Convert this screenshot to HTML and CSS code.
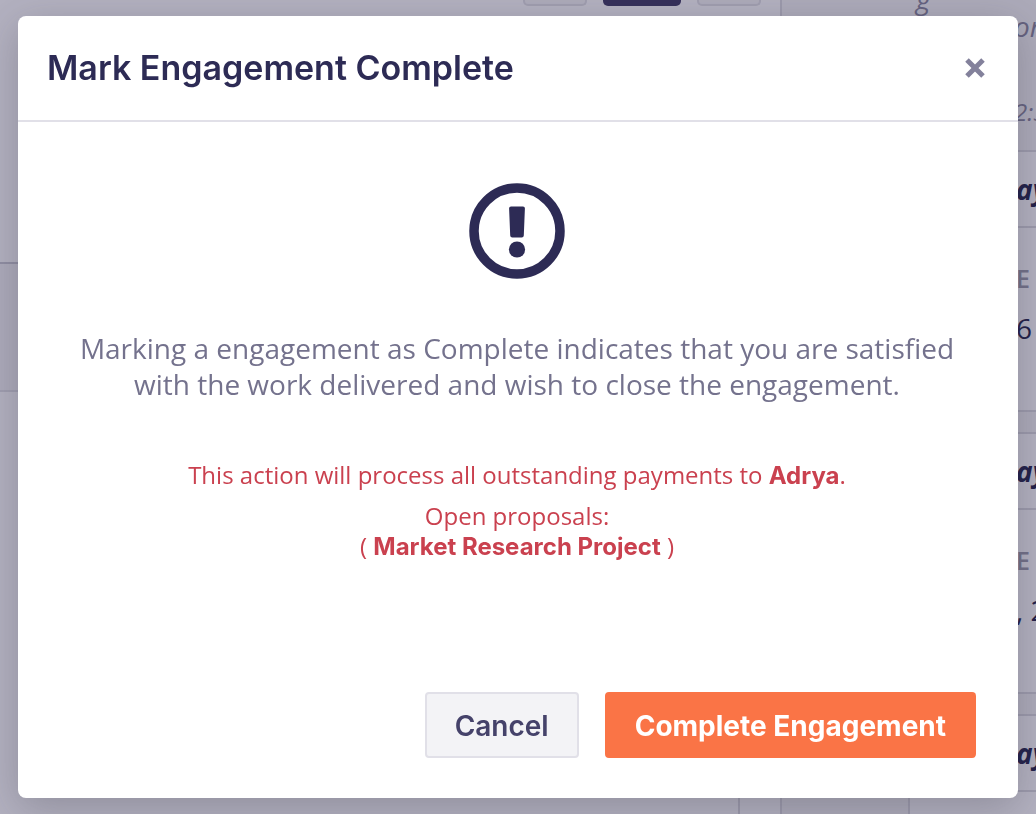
FILE: index.html
```html
<!DOCTYPE html>
<html lang="en">
<head>
<meta charset="utf-8">
<title>Mark Engagement Complete</title>
<link rel="stylesheet" href="styles.css">
</head>
<body>
<div class="page" inert>
  <main class="main">
    <div class="toolbar">
      <span class="tool tool-small"></span>
      <span class="tool tool-active"></span>
      <span class="tool tool-small"></span>
    </div>
    <div class="band"></div>
    <div class="main-foot"></div>
  </main>
  <aside class="side">
    <div class="note">
      <p class="note-start">g</p>
      <p class="note-line">or</p>
      <p class="note-time">2:3</p>
    </div>
    <section class="card">
      <h2 class="card-title">ay</h2>
      <div class="card-body"><p class="label">E</p><p class="value">6</p></div>
    </section>
    <section class="card">
      <h2 class="card-title">ay</h2>
      <div class="card-body"><p class="label">E</p><p class="value">, 2</p></div>
    </section>
    <section class="card">
      <h2 class="card-title">ay</h2>
      <div class="card-body"></div>
    </section>
  </aside>
</div>
<div class="overlay">
  <div class="modal" role="dialog" aria-modal="true" aria-labelledby="modal-title">
    <header class="modal-header">
      <h1 class="modal-title" id="modal-title">Mark Engagement Complete</h1>
      <button class="close" type="button" aria-label="Close">
        <svg width="20" height="20" viewBox="0 0 20 20" aria-hidden="true"><path d="M2 2L18 18M18 2L2 18" stroke="currentColor" stroke-width="5"/></svg>
      </button>
    </header>
    <div class="modal-body">
      <svg class="alert" width="96" height="96" viewBox="0 0 96 96" aria-hidden="true">
        <circle cx="48" cy="48" r="43" fill="none" stroke="currentColor" stroke-width="9.5"/>
        <path d="M42 23.5H54Q56 23.5 55.9 25.5L54.8 52.5Q54.7 54.5 52.7 54.5H43.3Q41.3 54.5 41.2 52.5L40.1 25.5Q40 23.5 42 23.5Z" fill="currentColor"/>
        <circle cx="48" cy="66.5" r="8.1" fill="currentColor"/>
      </svg>
      <p class="lead">Marking a engagement as Complete indicates that you are satisfied with the work delivered and wish to close the engagement.</p>
      <div class="warning">
        <p>This action will process all outstanding payments to <strong>Adrya</strong>.</p>
        <p>Open proposals:<br>( <strong>Market Research Project</strong> )</p>
      </div>
    </div>
    <footer class="modal-footer">
      <button class="btn btn-cancel" type="button">Cancel</button>
      <button class="btn btn-primary" type="button">Complete Engagement</button>
    </footer>
  </div>
</div>
</body>
</html>
```
FILE: styles.css
```css
* { box-sizing: border-box; }
body {
  margin: 0;
  font-family: "Open Sans", "Liberation Sans", sans-serif;
  background: #b3b1c0;
  color: #2d2b55;
}
h1, h2, p { margin: 0; }

.page {
  display: grid;
  grid-template-columns: minmax(0, 1fr) 256px;
  height: 100vh;
  overflow: hidden;
}
.main { display: flex; flex-direction: column; }
.toolbar {
  display: flex;
  justify-content: flex-end;
  gap: 16px;
  height: 262px;
  padding-right: 19px;
}
.tool { height: 6px; border-radius: 0 0 5px 5px; }
.tool-small { width: 64px; border: 2px solid #a09eaf; border-top: 0; background: #adabba; }
.tool-active { width: 78px; background: #35305a; }
.band {
  height: 130px;
  border-top: 2px solid #908ea3;
  border-bottom: 2px solid #a09eb0;
  background: #adabbb;
}
.main-foot {
  flex: 1;
  margin-right: 40px;
  border-right: 2px solid #9c9aac;
}
.side {
  border-left: 2px solid #9c9aac;
  background: #adabba;
  overflow: hidden;
  white-space: nowrap;
}
.note {
  height: 150px;
  padding-left: 134px;
  color: #65627f;
  font-size: 28px;
  font-style: italic;
  line-height: 36px;
}
.note-start { height: 8px; display: flex; align-items: flex-end; line-height: 20px; }
.note-line, .note-time { padding-left: 98px; }
.note-time { padding-top: 50px; font-size: 24px; }
.card {
  margin-left: 126px;
  margin-bottom: 20px;
  border: 2px solid #9c9aac;
  border-right: 0;
  background: #b3b1c0;
}
.card-title {
  height: 76px;
  padding-left: 106px;
  border-bottom: 2px solid #9c9aac;
  color: #222049;
  font-size: 28px;
  font-style: italic;
  line-height: 74px;
}
.card-body { height: 182px; padding: 34px 0 0 106px; }
.label { color: #727088; font-size: 25px; font-weight: 600; line-height: 32px; }
.value { padding-top: 16px; color: #222049; font-size: 28px; line-height: 36px; }

.overlay {
  position: fixed;
  inset: 0;
  display: flex;
  padding: 16px 18px;
}
.modal {
  flex: 1;
  display: flex;
  flex-direction: column;
  border-radius: 8px;
  background: #fff;
  box-shadow: 0 10px 40px rgba(50, 50, 60, 0.28);
}
.modal-header {
  display: flex;
  align-items: center;
  justify-content: space-between;
  padding: 30px 33px 30px 29px;
  border-bottom: 2px solid #e1e0e8;
}
.modal-title { font-family: Inter, "Liberation Sans", sans-serif; font-size: 34px; font-weight: 600; line-height: 44px; }
.close {
  display: flex;
  padding: 0;
  border: 0;
  background: none;
  color: #83819b;
}
.modal-body {
  flex: 1;
  display: flex;
  flex-direction: column;
  align-items: center;
  padding: 61px 52px 0 50px;
  text-align: center;
}
.lead {
  max-width: 890px;
  margin-top: 51px;
  color: #74728d;
  font-size: 28px;
  line-height: 36px;
}
.warning {
  display: grid;
  gap: 10px;
  margin-top: 58px;
  color: #ca414f;
  font-size: 24px;
  line-height: 30px;
}
.warning strong { font-family: Inter, "Liberation Sans", sans-serif; font-weight: 700; }
.modal-footer {
  display: flex;
  justify-content: flex-end;
  gap: 26px;
  padding: 0 42px 40px;
}
.btn {
  height: 66px;
  padding: 2px 28px 0;
  border: 2px solid #e1e0e8;
  border-radius: 4px;
  font: 700 28px/36px Inter, "Liberation Sans", sans-serif;
}
.btn-cancel { background: #f3f3f6; color: #45426a; font-weight: 600; }
.btn-primary { border-color: #fa7446; background: #fa7446; color: #fff; }
```
